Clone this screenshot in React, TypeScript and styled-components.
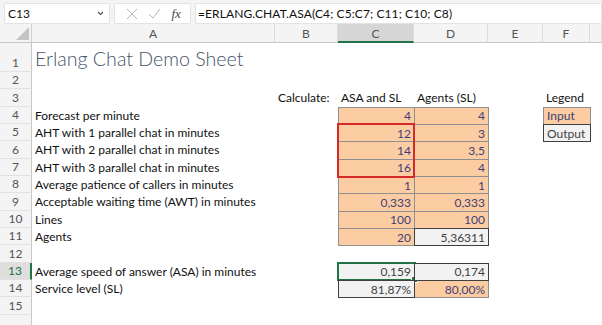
import { Fragment } from "react";
import styled, { createGlobalStyle } from "styled-components";

const GlobalStyle = createGlobalStyle`
  html, body {
    margin: 0;
    padding: 0;
    background: #ffffff;
  }
  body {
    font-family: Lato, "Liberation Sans", sans-serif;
    overflow: hidden;
  }
`;

const Window = styled.div`
  width: 602px;
  height: 325px;
  overflow: hidden;
  display: flex;
  flex-direction: column;
`;

const FormulaBar = styled.div`
  height: 29px;
  box-sizing: border-box;
  display: flex;
  gap: 4px;
  padding: 3px 0 0 4px;
  background: #f4f4f4;
`;

const BarBox = styled.div<{ $width?: number }>`
  height: 21px;
  box-sizing: border-box;
  ${(p) => (p.$width ? `width: ${p.$width}px;` : "flex: 1;")}
  background: #ffffff;
  border: 1px solid #e3e3e3;
  border-radius: 2px;
  display: flex;
  align-items: center;
  font-size: 12px;
  color: #111;
`;

const NameText = styled.span`
  flex: 1;
  padding-left: 3px;
`;

const IconRow = styled.div`
  flex: 1;
  display: flex;
  align-items: center;
  justify-content: space-around;
  padding: 0 4px 0 6px;
`;

const Fx = styled.span`
  font-family: "Liberation Serif", serif;
  font-style: italic;
  font-size: 13px;
  color: #444;
`;

const FormulaText = styled.span`
  padding-left: 2px;
  letter-spacing: 0.1px;
`;

const Sheet = styled.div`
  display: grid;
  grid-template-columns: 32px 243px 63px 76px 74px 55px 47px 1fr;
  grid-template-rows: 19px 29px repeat(15, 17.33px) 1fr;
  flex: 1;
  font-size: 12px;
`;

const Corner = styled.div`
  background: #f4f4f4;
  border-right: 1px solid #cfcfcf;
  border-bottom: 1px solid #c8c8c8;
  display: flex;
  align-items: flex-end;
  justify-content: flex-end;
  padding: 0 2px 2px 0;
`;

const ColHead = styled.div<{ $selected?: boolean }>`
  background: ${(p) => (p.$selected ? "#d6d6d6" : "#f4f4f4")};
  border-right: 1px solid #dcdcdc;
  border-bottom: ${(p) => (p.$selected ? "2px solid #217346" : "1px solid #c8c8c8")};
  color: #555;
  display: flex;
  align-items: center;
  justify-content: center;
  padding-top: 1px;
`;

const RowHead = styled.div<{ $selected?: boolean }>`
  background: ${(p) => (p.$selected ? "#dedede" : "#f4f4f4")};
  color: ${(p) => (p.$selected ? "#217346" : "#555")};
  border-bottom: 1px solid #e2e2e2;
  border-right: ${(p) => (p.$selected ? "2px solid #217346" : "1px solid #c8c8c8")};
  display: flex;
  align-items: flex-end;
  justify-content: center;
  padding-bottom: 1px;
  box-sizing: border-box;
`;

type Kind = "in" | "out";

const Cell = styled.div<{ $kind?: Kind; $left?: boolean }>`
  box-sizing: border-box;
  position: relative;
  display: flex;
  align-items: center;
  justify-content: ${(p) => (p.$kind && !p.$left ? "flex-end" : "flex-start")};
  padding: 0 3px;
  white-space: nowrap;
  color: #111;
  ${(p) =>
    p.$kind === "in" &&
    `
    background: #fccca3;
    color: #3f3f76;
    border: 1px solid #8f8f8f;
    margin: 0 -1px -1px 0;
  `}
  ${(p) =>
    p.$kind === "out" &&
    `
    background: #f2f2f2;
    color: #3f3f3f;
    border: 1px solid #3f3f3f;
    margin: 0 -1px -1px 0;
    z-index: 1;
  `}
`;

const Title = styled.div`
  display: flex;
  align-items: flex-end;
  padding: 0 0 0 3px;
  font-weight: 300;
  font-size: 19.6px;
  color: #44546a;
  white-space: nowrap;
  line-height: 26px;
`;

/* red outline drawn over C5:C7 */
const RedBox = styled.span`
  position: absolute;
  left: -2px;
  top: -2px;
  width: 78px;
  height: 55px;
  box-sizing: border-box;
  border: 2px solid #d42a2a;
  z-index: 2;
  pointer-events: none;
`;

/* active cell outline on C13 */
const Selection = styled.span`
  position: absolute;
  inset: -2px -2px -1px -2px;
  border: 2px solid #217346;
  z-index: 3;
  pointer-events: none;
`;

const Handle = styled.span`
  position: absolute;
  right: -4px;
  bottom: -4px;
  width: 5px;
  height: 5px;
  background: #217346;
  border: 1px solid #ffffff;
`;

type CellDef = { v?: string; k?: Kind; l?: boolean };

const columns = ["A", "B", "C", "D", "E", "F", ""];

const rows: CellDef[][] = [
  [],
  [],
  [{}, { v: "Calculate:" }, { v: "ASA and SL" }, { v: "Agents (SL)" }, {}, { v: "Legend" }],
  [{ v: "Forecast per minute" }, {}, { v: "4", k: "in" }, { v: "4", k: "in" }, {}, { v: "Input", k: "in", l: true }],
  [{ v: "AHT with 1 parallel chat in minutes" }, {}, { v: "12", k: "in" }, { v: "3", k: "in" }, {}, { v: "Output", k: "out", l: true }],
  [{ v: "AHT with 2 parallel chat in minutes" }, {}, { v: "14", k: "in" }, { v: "3,5", k: "in" }],
  [{ v: "AHT with 3 parallel chat in minutes" }, {}, { v: "16", k: "in" }, { v: "4", k: "in" }],
  [{ v: "Average patience of callers in minutes" }, {}, { v: "1", k: "in" }, { v: "1", k: "in" }],
  [{ v: "Acceptable waiting time (AWT) in minutes" }, {}, { v: "0,333", k: "in" }, { v: "0,333", k: "in" }],
  [{ v: "Lines" }, {}, { v: "100", k: "in" }, { v: "100", k: "in" }],
  [{ v: "Agents" }, {}, { v: "20", k: "in" }, { v: "5,36311", k: "out" }],
  [],
  [{ v: "Average speed of answer (ASA) in minutes" }, {}, { v: "0,159", k: "out" }, { v: "0,174", k: "out" }],
  [{ v: "Service level (SL)" }, {}, { v: "81,87%", k: "out" }, { v: "80,00%", k: "in" }],
  [],
  [],
];

function CrossIcon() {
  return (
    <svg width="12" height="12" viewBox="0 0 12 12">
      <path d="M1 1 L11 11 M11 1 L1 11" stroke="#b5b5b5" strokeWidth="1" fill="none" />
    </svg>
  );
}

function CheckIcon() {
  return (
    <svg width="13" height="11" viewBox="0 0 13 11">
      <path d="M1 6 L5 10 L12 1" stroke="#b5b5b5" strokeWidth="1" fill="none" />
    </svg>
  );
}

function Chevron() {
  return (
    <svg width="7" height="5" viewBox="0 0 7 5" style={{ marginRight: 5 }}>
      <path d="M1 1 L3.5 3.5 L6 1" stroke="#555" strokeWidth="1.2" fill="none" />
    </svg>
  );
}

export default function App() {
  return (
    <Window>
      <GlobalStyle />
      <FormulaBar>
        <BarBox $width={106}>
          <NameText>C13</NameText>
          <Chevron />
        </BarBox>
        <BarBox $width={77}>
          <IconRow>
            <CrossIcon />
            <CheckIcon />
            <Fx>fx</Fx>
          </IconRow>
        </BarBox>
        <BarBox>
          <FormulaText>=ERLANG.CHAT.ASA(C4; C5:C7; C11; C10; C8)</FormulaText>
        </BarBox>
      </FormulaBar>
      <Sheet>
        <Corner>
          <svg width="13" height="13" viewBox="0 0 13 13">
            <path d="M13 0 L13 13 L0 13 Z" fill="#c4c4c4" />
          </svg>
        </Corner>
        {columns.map((c, ci) => (
          <ColHead key={ci} $selected={c === "C"}>
            {c}
          </ColHead>
        ))}
        {rows.map((row, r) => (
          <Fragment key={r}>
            <RowHead $selected={r === 12}>{r < 15 ? r + 1 : ""}</RowHead>
            {columns.map((c, ci) => {
              if (r === 0 && ci === 0) {
                return <Title key={ci}>Erlang Chat Demo Sheet</Title>;
              }
              const def = row[ci] || {};
              return (
                <Cell key={ci} $kind={def.k} $left={def.l}>
                  {def.v}
                  {r === 4 && c === "C" && <RedBox />}
                  {r === 12 && c === "C" && (
                    <Selection>
                      <Handle />
                    </Selection>
                  )}
                </Cell>
              );
            })}
          </Fragment>
        ))}
      </Sheet>
    </Window>
  );
}
